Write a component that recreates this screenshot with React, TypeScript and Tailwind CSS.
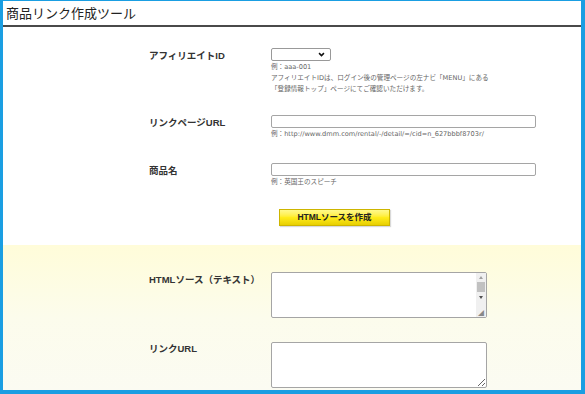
const jp = "font-['Liberation_Sans','Noto_Sans_CJK_JP',sans-serif]";
const hintFont = "font-['DejaVu_Sans','Noto_Sans_CJK_JP',sans-serif]";

interface RowProps {
  label: string;
  labelPad?: string;
  className?: string;
  children: React.ReactNode;
}

const Row: React.FC<RowProps> = ({ label, labelPad = "pt-[2px]", className = "", children }) => (
  <div className={`flex items-start pl-[146px] ${className}`}>
    <div className={`w-[122px] shrink-0 text-[9.5px] font-bold leading-[11px] text-[#333] ${labelPad}`}>{label}</div>
    <div className="flex flex-col">{children}</div>
  </div>
);

const Hint: React.FC<{ children: React.ReactNode }> = ({ children }) => (
  <p className={`text-[6.6px] leading-[11px] text-[#666] whitespace-nowrap ${hintFont}`}>{children}</p>
);

export default function App() {
  return (
    <div className={`h-[394px] w-[585px] overflow-hidden bg-[#1a9ee2] pt-[1px] pl-[3px] pr-[4px] pb-[4px] ${jp}`}>
      <div className="flex h-full flex-col overflow-hidden bg-white">
        {/* title */}
        <div className="h-[26px] border-b-[2px] border-[#4a4a4a] pl-[3px] pt-[4px] text-[13px] leading-[18px] text-[#222]">
          商品リンク作成ツール
        </div>

        {/* form */}
        <div className="pt-[21px] pb-[19px]">
          <Row label="アフィリエイトID">
            <div className="relative h-[13px] w-[60px]">
              <select className="block h-[13px] w-[60px] appearance-none rounded-[2px] border border-[#999] bg-white text-[7px]" />
              <svg viewBox="0 0 10 10" className="pointer-events-none absolute right-[6px] top-[3px] h-[7px] w-[7px]">
                <polyline points="1.5,3 5,6.5 8.5,3" fill="none" stroke="#111" strokeWidth="2.2" />
              </svg>
            </div>
            <div className="mt-[1px]">
              <Hint>例：aaa-001</Hint>
              <Hint>アフィリエイトIDは、ログイン後の管理ページの左ナビ「MENU」にある</Hint>
              <Hint>「登録情報トップ」ページにてご確認いただけます。</Hint>
            </div>
          </Row>

          <Row label="リンクページURL" className="mt-[20px]">
            <input className="block h-[13px] w-[265px] rounded-[2px] border border-[#a5a5a5] bg-white" />
            <div className="mt-[1px]">
              <Hint>例：http://www.dmm.com/rental/-/detail/=/cid=n_627bbbf8703r/</Hint>
            </div>
          </Row>

          <Row label="商品名" className="mt-[23px]">
            <input className="block h-[13px] w-[265px] rounded-[2px] border border-[#a5a5a5] bg-white" />
            <div className="mt-[1px]">
              <Hint>例：英国王のスピーチ</Hint>
            </div>
          </Row>

          <div className="mt-[21px] pl-[276px]">
            <button className="block h-[17px] w-[111px] border border-[#cdb500] bg-linear-to-b from-[#fff98a] via-[#ffec1a] to-[#e8cf00] text-[8.5px] font-bold leading-[15px] text-[#222] shadow-[1px_1px_1px_rgba(0,0,0,0.15)]">
              HTMLソースを作成
            </button>
          </div>
        </div>

        {/* output */}
        <div className="flex-1 bg-linear-to-b from-[#fffcd9] via-[#fcfcec] to-[#fbfbf2] pt-[27px]">
          <Row label="HTMLソース（テキスト）">
            <div className="flex h-[46px] w-[216px] rounded-[2px] border border-[#a5a5a5] bg-white">
              <textarea className="h-full flex-1 resize-none bg-transparent outline-none" />
              <div className="flex w-[10px] flex-col items-center bg-[#f0f0f0]">
                <span className="mt-[3px] h-0 w-0 border-x-[2.5px] border-b-[3px] border-x-transparent border-b-[#a0a0a0]" />
                <span className="mt-[3px] h-[10px] w-[8px] bg-[#c1c1c1]" />
                <span className="mt-[4px] h-0 w-0 border-x-[2.5px] border-t-[3px] border-x-transparent border-t-[#505050]" />
                <span className="mt-auto mb-[1px] text-[6px] leading-[6px] text-[#888]">◢</span>
              </div>
            </div>
          </Row>
          <Row label="リンクURL" labelPad="pt-[1px]" className="mt-[24px]">
            <textarea className="block h-[46px] w-[216px] rounded-[2px] border border-[#a5a5a5] bg-white" />
          </Row>
        </div>
      </div>
    </div>
  );
}
